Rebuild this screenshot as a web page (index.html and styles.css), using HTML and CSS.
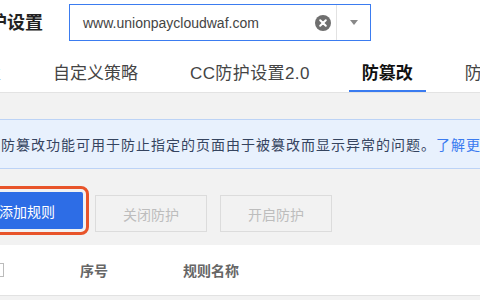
FILE: index.html
```html
<!DOCTYPE html>
<html lang="zh-CN">
<head>
<meta charset="utf-8">
<link rel="stylesheet" href="styles.css">
</head>
<body>
<div class="page">
  <header class="header">
    <div class="titlebar">
      <h1 class="title">防护设置</h1>
      <div class="select">
        <span class="select-value">www.unionpaycloudwaf.com</span>
        <span class="select-clear">
          <svg width="16" height="16" viewBox="0 0 16 16"><circle cx="8" cy="8" r="8" fill="#6f6f6f"/><path d="M5.2 5.2 L10.8 10.8 M10.8 5.2 L5.2 10.8" stroke="#fff" stroke-width="2" stroke-linecap="round"/></svg>
        </span>
        <span class="select-divider"></span>
        <span class="select-arrow"></span>
      </div>
    </div>
    <nav class="tabs">
      <span class="tab">防护配置</span>
      <span class="tab">自定义策略</span>
      <span class="tab tab-wide">CC防护设置2.0</span>
      <span class="tab tab-active">防篡改</span>
      <span class="tab">防信息泄露</span>
    </nav>
  </header>
  <main class="content">
    <div class="notice">防篡改功能可用于防止指定的页面由于被篡改而显示异常的问题。<a class="notice-link">了解更多</a></div>
    <div class="toolbar">
      <span class="btn btn-primary">添加规则</span>
      <span class="btn btn-disabled">关闭防护</span>
      <span class="btn btn-disabled">开启防护</span>
    </div>
    <div class="table-head">
      <span class="checkbox"></span>
      <span class="th th-index">序号</span>
      <span class="th th-name">规则名称</span>
    </div>
  </main>
</div>
</body>
</html>
```
FILE: styles.css
```css
* { box-sizing: border-box; }
html, body { margin: 0; padding: 0; }
body {
  width: 480px;
  height: 300px;
  overflow: hidden;
  background: #f2f2f2;
  font-family: "Liberation Sans", "Noto Sans CJK SC", sans-serif;
  color: #333;
}
.page { width: 480px; }

.header {
  background: #fff;
  border-bottom: 1px solid #e3e3e3;
}
.titlebar {
  height: 45px;
  display: flex;
  align-items: center;
}
.title {
  margin: 0 0 0 -29px;
  font-size: 18px;
  font-weight: bold;
  line-height: 20px;
  color: #222;
  white-space: nowrap;
}
.select {
  margin-left: 26px;
  width: 302px;
  height: 37px;
  border: 1px solid #3b7cf0;
  display: flex;
  align-items: center;
  background: #fff;
}
.select-value {
  flex: 1;
  padding-left: 13px;
  font-size: 14px;
  color: #444;
  white-space: nowrap;
}
.select-clear {
  width: 16px;
  height: 16px;
  display: flex;
}
.select-divider {
  margin-left: 5px;
  width: 1px;
  align-self: stretch;
  background: #e2e2e2;
}
.select-arrow {
  width: 33px;
  display: flex;
  justify-content: center;
  align-items: center;
  height: 100%;
}
.select-arrow::before {
  content: "";
  border-left: 4.5px solid transparent;
  border-right: 4.5px solid transparent;
  border-top: 5px solid #888;
}

.tabs {
  display: flex;
  gap: 26px;
  margin-left: -80px;
  height: 47px;
  white-space: nowrap;
}
.tab {
  padding: 19px 13px 0;
  font-size: 17px;
  line-height: 20px;
  color: #444;
  border-bottom: 2px solid transparent;
}
.tab-wide { letter-spacing: 0.4px; }
.tab-active {
  font-weight: bold;
  color: #111;
  border-bottom-color: #3a7bf0;
}

.content { padding-top: 26px; }
.notice {
  height: 50px;
  background: #e8f1fd;
  border-top: 1px solid #bcd3f6;
  border-bottom: 1px solid #bcd3f6;
  padding-left: 1px;
  display: flex;
  align-items: center;
  font-size: 14px;
  letter-spacing: 1px;
  color: #35445f;
  white-space: nowrap;
  overflow: hidden;
}
.notice-link { color: #3a7bf0; }

.toolbar {
  display: flex;
  align-items: flex-start;
  gap: 13px;
  margin-top: 26px;
  height: 50px;
}
.btn {
  width: 112px;
  height: 37px;
  display: flex;
  align-items: center;
  justify-content: center;
  font-size: 14px;
  white-space: nowrap;
}
.btn-primary {
  margin-left: -29px;
  margin-right: -1px;
  margin-top: -3px;
  background: #2d6de6;
  color: #fff;
  border-radius: 2px;
  outline: 3px solid #e8542a;
  outline-offset: 3px;
}
.btn-disabled {
  border: 1px solid #dcdcdc;
  background: #f2f2f2;
  color: #bdbdbd;
}

.table-head {
  height: 51px;
  background: #fff;
  border-bottom: 1px solid #e2e2e2;
  display: flex;
  align-items: center;
}
.checkbox {
  width: 14px;
  height: 14px;
  margin-left: -10px;
  border: 1px solid #bbb;
  background: #fff;
}
.th {
  font-size: 14px;
  font-weight: bold;
  color: #666;
  white-space: nowrap;
}
.th-index { margin-left: 76px; }
.th-name { margin-left: 75px; }
```
